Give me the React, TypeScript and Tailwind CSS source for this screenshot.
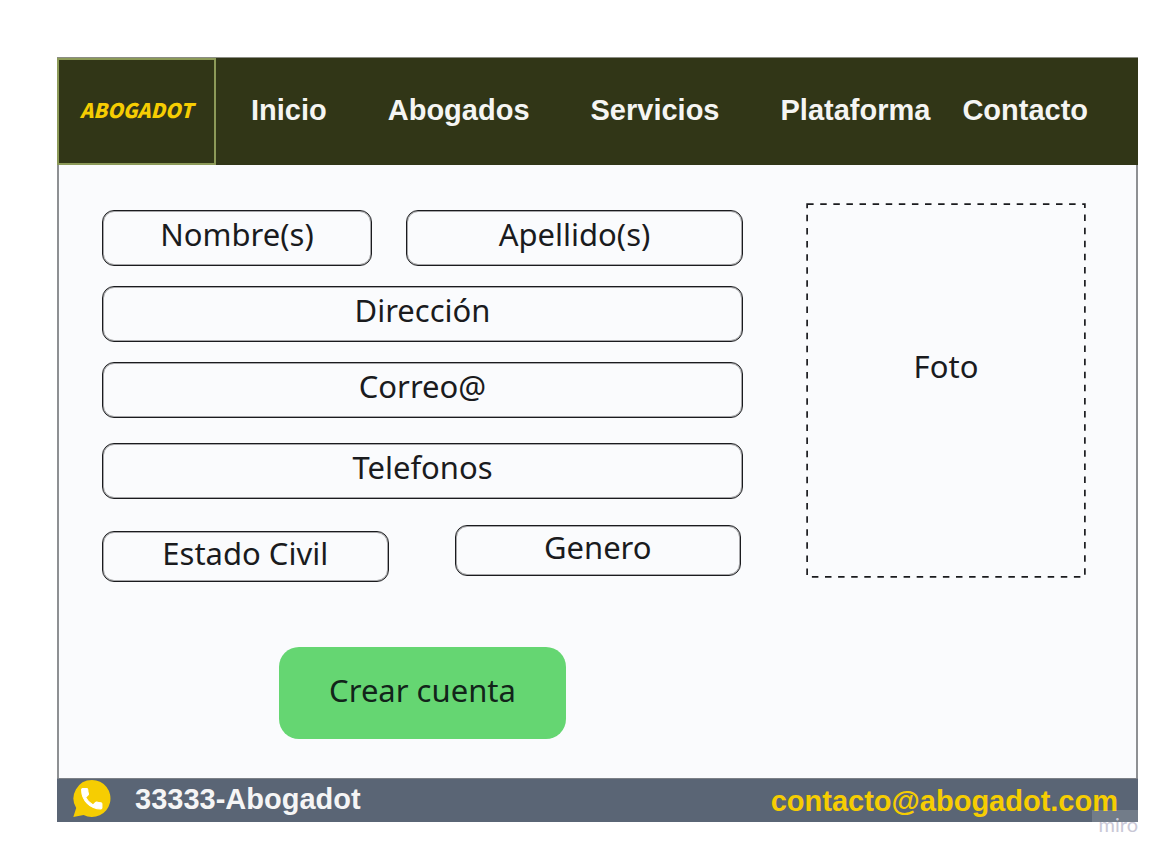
import type { ReactNode } from "react";

type FieldProps = { id: string; label: string; className?: string };

function Field({ id, label, className = "h-14" }: FieldProps) {
  return (
    <input
      id={id}
      name={id}
      type="text"
      aria-label={label}
      placeholder={label}
      className={`block w-full min-w-0 rounded-xl border border-[#1a1b1e] bg-transparent px-3 pb-2 text-center text-[31px] leading-10 text-[#1a1b1e] shadow-[inset_0_0_0_1px_#1a1b1e60] placeholder:text-[#1a1b1e] ${className}`}
    />
  );
}

function NavLink({ href, children }: { href: string; children: ReactNode }) {
  return (
    <a href={href} className="text-[#f5f5f3]">
      {children}
    </a>
  );
}

function ChatPhoneIcon() {
  return (
    <svg viewBox="0 0 38 38" className="h-[38px] w-[38px] shrink-0" aria-hidden="true">
      <path
        d="M19 0A18.5 18.5 0 1 1 10.6 35L.3 37.1 3.2 28.1A18.5 18.5 0 0 1 19 0Z"
        fill="#f6cd02"
      />
      <path
        transform="translate(5.2 5.2) scale(1.13)"
        d="M6.62 10.79c1.44 2.83 3.76 5.14 6.59 6.59l2.2-2.2c.27-.27.67-.36 1.02-.24 1.12.37 2.33.57 3.57.57.55 0 1 .45 1 1V20c0 .55-.45 1-1 1-9.39 0-17-7.61-17-17 0-.55.45-1 1-1h3.5c.55 0 1 .45 1 1 0 1.25.2 2.45.57 3.57.11.35.03.74-.25 1.02l-2.2 2.2z"
        fill="#fff"
        stroke="#fff"
        strokeWidth="0.9"
      />
    </svg>
  );
}

export default function App() {
  return (
    <div className="min-h-screen bg-white pt-[57px] pr-[26px] pb-9 pl-[57px] font-['Noto_Sans',sans-serif] text-[#1a1b1e]">
      <div className="relative">
        <header className="flex h-[108px] items-stretch border-t border-[#8b8d84] bg-[#313617] font-['Liberation_Sans',Arial,sans-serif] font-bold">
          <a
            href="#inicio"
            className="flex w-[159px] shrink-0 items-center justify-center border-2 border-[#8c9a58] pb-1 font-['Noto_Sans_CJK_SC',sans-serif] text-xl font-black text-[#f6cd02] italic"
          >
            ABOGADOT
          </a>
          <nav className="flex items-center gap-8 pb-1 pl-[35px] text-[29px] leading-9">
            <div className="flex gap-[61px]">
              <NavLink href="#inicio">Inicio</NavLink>
              <NavLink href="#abogados">Abogados</NavLink>
              <NavLink href="#servicios">Servicios</NavLink>
              <NavLink href="#plataforma">Plataforma</NavLink>
            </div>
            <NavLink href="#contacto">Contacto</NavLink>
          </nav>
        </header>

        <main className="border-x-2 border-[#8e9093] bg-[#fafbfd] pb-[39px]">
          <form className="flex items-start gap-[63px] pt-[38px] pr-[50px] pl-[43px]">
            <div className="min-w-0 flex-1 pt-[7px]">
              <div className="flex flex-col gap-5">
                <div className="grid grid-cols-[270fr_337fr] gap-[34px]">
                  <Field id="nombre" label="Nombre(s)" />
                  <Field id="apellido" label="Apellido(s)" />
                </div>
                <Field id="direccion" label="Dirección" />
                <Field id="correo" label="Correo@" />
              </div>
              <div className="flex flex-col gap-[26px] pt-[25px]">
                <Field id="telefonos" label="Telefonos" />
                <div className="grid grid-cols-2 gap-[66px] pr-0.5">
                  <div className="pt-1.5">
                    <Field id="estado-civil" label="Estado Civil" className="h-[51px]" />
                  </div>
                  <Field id="genero" label="Genero" className="h-[51px]" />
                </div>
              </div>
              <div className="flex justify-center pt-[65px]">
                <button
                  type="submit"
                  className="h-[92px] w-[287px] rounded-[20px] bg-[#65d672] pb-1.5 text-[31px] leading-10 text-[#12241a]"
                >
                  Crear cuenta
                </button>
              </div>
            </div>

            <label
              htmlFor="foto"
              className="relative flex h-[375px] w-[280px] shrink-0 items-center justify-center pb-[50px] text-[31px] leading-10"
            >
              <svg className="absolute inset-0 h-full w-full" aria-hidden="true">
                <rect
                  x="0.4%"
                  y="0.3%"
                  width="99.2%"
                  height="99.4%"
                  fill="none"
                  stroke="#1a1b1e"
                  strokeWidth="1.7"
                  strokeDasharray="6.5 6.6"
                />
              </svg>
              Foto
              <input
                id="foto"
                name="foto"
                type="file"
                accept="image/*"
                className="absolute inset-0 cursor-pointer opacity-0"
              />
            </label>
          </form>
        </main>

        <footer className="flex h-11 items-center justify-between border-t border-[#7c8087] bg-[#5a6575] pr-5 pl-4 font-['Liberation_Sans',Arial,sans-serif] text-[29px] leading-9 font-bold">
          <div className="flex items-center gap-6 pb-1 text-[#f5f5f5]">
            <ChatPhoneIcon />
            <a href="tel:33333">33333-Abogadot</a>
          </div>
          <a href="mailto:contacto@abogadot.com" className="text-[#f6cd02]">
            contacto@abogadot.com
          </a>
        </footer>

        <div className="absolute right-0 -bottom-3 flex h-6 w-[46px] items-end justify-end bg-white/15 font-['Lato',sans-serif] text-xl leading-5 text-[#c9c8d6]">
          miro
        </div>
      </div>
    </div>
  );
}
